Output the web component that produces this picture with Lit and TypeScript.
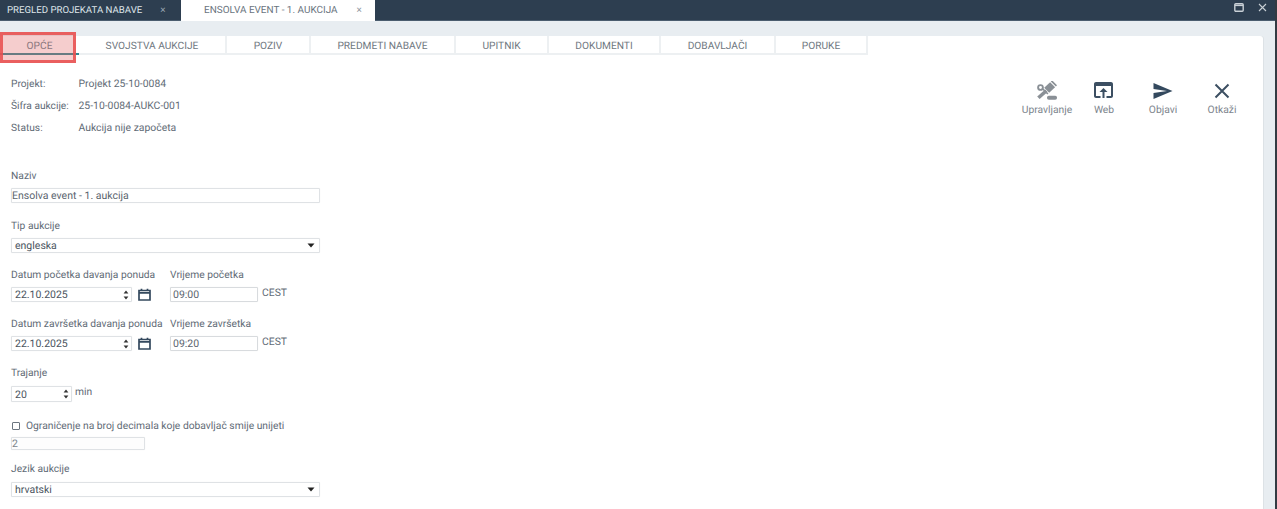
import { LitElement, html, css } from "lit";
import { customElement } from "lit/decorators.js";

const caret = html`<svg class="caret" width="8" height="5" viewBox="0 0 8 5"><path d="M.5 .5h7L4 4.500z" fill="#222"/></svg>`;
const spin = html`<svg class="spin" width="6" height="12" viewBox="0 0 6 12"><path d="M3 1.500l2.400 3H.6zM3 10.500L.6 7.500h4.800z" fill="#333"/></svg>`;
const cal = html`<svg class="cal" width="13" height="13" viewBox="0 0 13 13"><path d="M1 2.500h11v9.500H1zM1 4.800h11M3.500 .8v2M9.500 .8v2" fill="none" stroke="#34495e" stroke-width="1.700"/></svg>`;

@customElement("app-root")
export class AppRoot extends LitElement {
  static styles = css`
    :host { display: block; width: 1277px; height: 509px; overflow: hidden; position: relative; background: #e8edf1;
      font-family: Roboto, "Liberation Sans", sans-serif; font-size: 10.25px; color: #5f6b76; text-rendering: geometricPrecision; }
    .top { height: 21px; background: #2d3e50; display: flex; align-items: stretch; box-sizing: border-box; border-bottom: 1px solid #4a5c6e; }
    .tab { display: flex; align-items: center; }
    .tab.a { width: 181px; padding-left: 7px; box-sizing: border-box; color: #dfe5ea; font-size: 9.65px; }
    .tab.a .x { margin-left: 18px; color: #9aa7b3; }
    .tab.b { width: 194px; padding-left: 23px; box-sizing: border-box; background: #fff; color: #6a747e; height: 21px; font-size: 9.95px; }
    .tab.b .x { margin-left: 19px; color: #8c96a0; }
    .x { font-size: 10px; }
    .win { margin-left: auto; display: flex; align-items: center; gap: 14px; padding: 0 10px 5px 0; }
    .main { display: flex; height: 488px; padding: 15px 14px 0 0; box-sizing: border-box; }
    .card { flex: 1; background: #fff; border-radius: 0 3px 0 0; position: relative; box-shadow: 1px 0 0 #dde2e6; }
    .tabs { display: flex; height: 19px; box-sizing: border-box; border-bottom: 2px solid #edf0f2; width: 868px; }
    .t { display: flex; align-items: center; justify-content: center; font-size: 10.2px; color: #6f7881; box-sizing: border-box; border-right: 2px solid #edf0f2; padding-top: 3px; }
    .t.on { border-right: none; color: #5f7f8a; position: relative; box-shadow: 0 2px 0 #2f8790; }
    .mark { position: absolute; left: 0; top: -4px; width: 76px; height: 31px; border: 3px solid rgba(232,80,80,.88); background: rgba(225,100,100,.32); box-sizing: border-box; z-index: 2; }
    .body { padding: 22px 0 0 11px; }
    .info { display: grid; grid-template-columns: 67.5px auto; grid-auto-rows: 13px; row-gap: 9px; line-height: 13px; justify-content: start; align-items: baseline; font-size: 10.4px; }
    .info .k { font-size: 10.2px; }
    .lbl { line-height: 13px; }
    .naziv { margin-top: 35px; }
    .inp { box-sizing: border-box; height: 15px; border: 1px solid #dfe2e5; box-shadow: 0 0 1px #e8e8e8; border-radius: 1px; display: flex; align-items: center; padding: 0 3px 0 0; background: #fff; line-height: 13px; color: #5a646e; font-size: 10.5px; }
    .inp.w { width: 309px; margin-top: 6px; }
    .sel { padding-left: 3px; padding-right: 4px; justify-content: space-between; color: #4a545e; }
    .mt1 { margin-top: 16px; }
    .row { display: flex; }
    .c1 { width: 159px; }
    .dt { display: flex; align-items: center; margin-top: 6px; }
    .inp.d { width: 121px; padding-left: 3px; padding-right: 2px; justify-content: space-between; color: #4a545e; }
    .cal { margin-left: 6px; }
    .inp.t2 { width: 88px; padding-left: 2px; border-color: #d8dbde; color: #5a646e; }
    .cest { margin-left: 4px; margin-top: -1px; line-height: 13px; font-size: 10.4px; }
    .tz { display: flex; align-items: flex-start; margin-top: 6px; }
    .dur { display: flex; margin-top: 7px; }
    .inp.n { width: 61px; padding-left: 3px; padding-right: 2px; justify-content: space-between; color: #4a545e; height: 16px; }
    .min { margin-left: 3px; margin-top: -1px; line-height: 13px; }
    .chk { display: flex; align-items: center; margin-top: 17px; height: 13px; font-size: 10.3px; }
    .box { width: 6px; height: 6px; border: 1px solid #6c7680; border-radius: 1px; margin: 0 6px 0 1px; }
    .inp.two { width: 134px; height: 13px; margin-top: 5px; color: #7b848c; background: #fdfdfd; }
    .acts { position: absolute; top: 45px; left: 1000px; width: 263px; height: 40px; }
    .ac { position: absolute; top: 0; display: flex; flex-direction: column; align-items: center; width: 70px; color: #7d858d; font-size: 10.3px; line-height: 12px; }
    .ac svg { height: 20px; width: 22px; display: block; margin-bottom: 3px; }
    .edge { position: absolute; top: 0; right: 0; width: 2px; height: 509px; background: #333b43; }
  `;

  render() {
    const tabs: [string, number][] = [["OPĆE", 79], ["SVOJSTVA AUKCIJE", 148], ["POZIV", 84], ["PREDMETI NABAVE", 145], ["UPITNIK", 93], ["DOKUMENTI", 112], ["DOBAVLJAČI", 115], ["PORUKE", 92]];
    return html`
      <div class="top">
        <div class="tab a">PREGLED PROJEKATA NABAVE <span class="x">×</span></div>
        <div class="tab b">ENSOLVA EVENT - 1. AUKCIJA <span class="x">×</span></div>
        <div class="win">
          <svg width="10" height="9" viewBox="0 0 10 9"><rect x=".8" y=".8" width="8.400" height="7.400" rx="1" fill="none" stroke="#c9d0d6" stroke-width="1.400"/><path d="M1 2.400h8" stroke="#c9d0d6" stroke-width="1.400"/></svg>
          <svg width="9" height="9" viewBox="0 0 9 9"><path d="M1 1l7 7M8 1L1 8" stroke="#c9d0d6" stroke-width="1.100"/></svg>
        </div>
      </div>
      <div class="main">
        <div class="card">
          <div class="tabs">
            ${tabs.map(([t, w], i) => html`<div class="t ${i === 0 ? "on" : ""}" style="width:${w}px">${t}</div>`)}
          </div>
          <div class="mark"></div>
          <div class="body">
            <div class="info">
              <span class="k">Projekt:</span><span>Projekt 25-10-0084</span>
              <span class="k">Šifra aukcije:</span><span>25-10-0084-AUKC-001</span>
              <span class="k">Status:</span><span>Aukcija nije započeta</span>
            </div>
            <div class="naziv lbl">Naziv</div>
            <div class="inp w">Ensolva event - 1. aukcija</div>
            <div class="lbl mt1">Tip aukcije</div>
            <div class="inp w sel">engleska ${caret}</div>
            <div class="row" style="margin-top:15px">
              <div class="c1"><div class="lbl">Datum početka davanja ponuda</div><div class="dt"><div class="inp d">22.10.2025 ${spin}</div>${cal}</div></div>
              <div><div class="lbl">Vrijeme početka</div><div class="tz"><div class="inp t2">09:00</div><span class="cest">CEST</span></div></div>
            </div>
            <div class="row" style="margin-top:15px">
              <div class="c1"><div class="lbl">Datum završetka davanja ponuda</div><div class="dt"><div class="inp d">22.10.2025 ${spin}</div>${cal}</div></div>
              <div><div class="lbl">Vrijeme završetka</div><div class="tz"><div class="inp t2">09:20</div><span class="cest">CEST</span></div></div>
            </div>
            <div class="lbl" style="margin-top:15px">Trajanje</div>
            <div class="dur"><div class="inp n">20 ${spin}</div><span class="min">min</span></div>
            <div class="chk"><span class="box"></span>Ograničenje na broj decimala koje dobavljač smije unijeti</div>
            <div class="inp two">2</div>
            <div class="lbl" style="margin-top:12px">Jezik aukcije</div>
            <div class="inp w sel" style="margin-top:7px">hrvatski ${caret}</div>
          </div>
          <div class="acts">
            <div class="ac" style="left:12px"><svg viewBox="0 0 22 20"><g fill="#8a9096"><path d="M3.600 18l-2.400-2.400 8-7 2.400 2.400z"/><path d="M8.200 6.800l5.900-5.600 5 5-5.900 5.600z"/><path d="M14.800 .4l1.400-1 4.800 4.800-1.100 1.300zM7.500 7.500l-1 1.200 4.800 4.800 1.200-1.100z"/><rect x="11" y="14.800" width="10" height="4" rx="1.800"/></g><circle cx="4.500" cy="6.500" r="2.400" fill="none" stroke="#8a9096" stroke-width="1.900"/></svg>Upravljanje</div>
            <div class="ac" style="left:69px"><svg viewBox="0 0 22 20"><path transform="translate(-1.500 -3)" d="M19.500 4h-15c-1.100 0-2 .9-2 2v12c0 1.100.9 2 2 2h4.500v-2h-4.500V8h15v10h-4.500v2h4.500c1.100 0 2-.9 2-2V6c0-1.100-.9-2-2-2zM12 10l-4 4h3v6h2v-6h3z" fill="#3c4f62"/></svg>Web</div>
            <div class="ac" style="left:128px"><svg viewBox="0 0 22 20"><path d="M1.500 2L20.500 10 1.500 18l0-6 13.500-2-13.500-2z" fill="#34495e"/></svg>Objavi</div>
            <div class="ac" style="left:187px"><svg viewBox="0 0 22 20"><path d="M4.500 3.500l13 13M17.500 3.500l-13 13" stroke="#3c4f62" stroke-width="2"/></svg>Otkaži</div>
          </div>
        </div>
      </div>
      <div class="edge"></div>
    `;
  }
}
